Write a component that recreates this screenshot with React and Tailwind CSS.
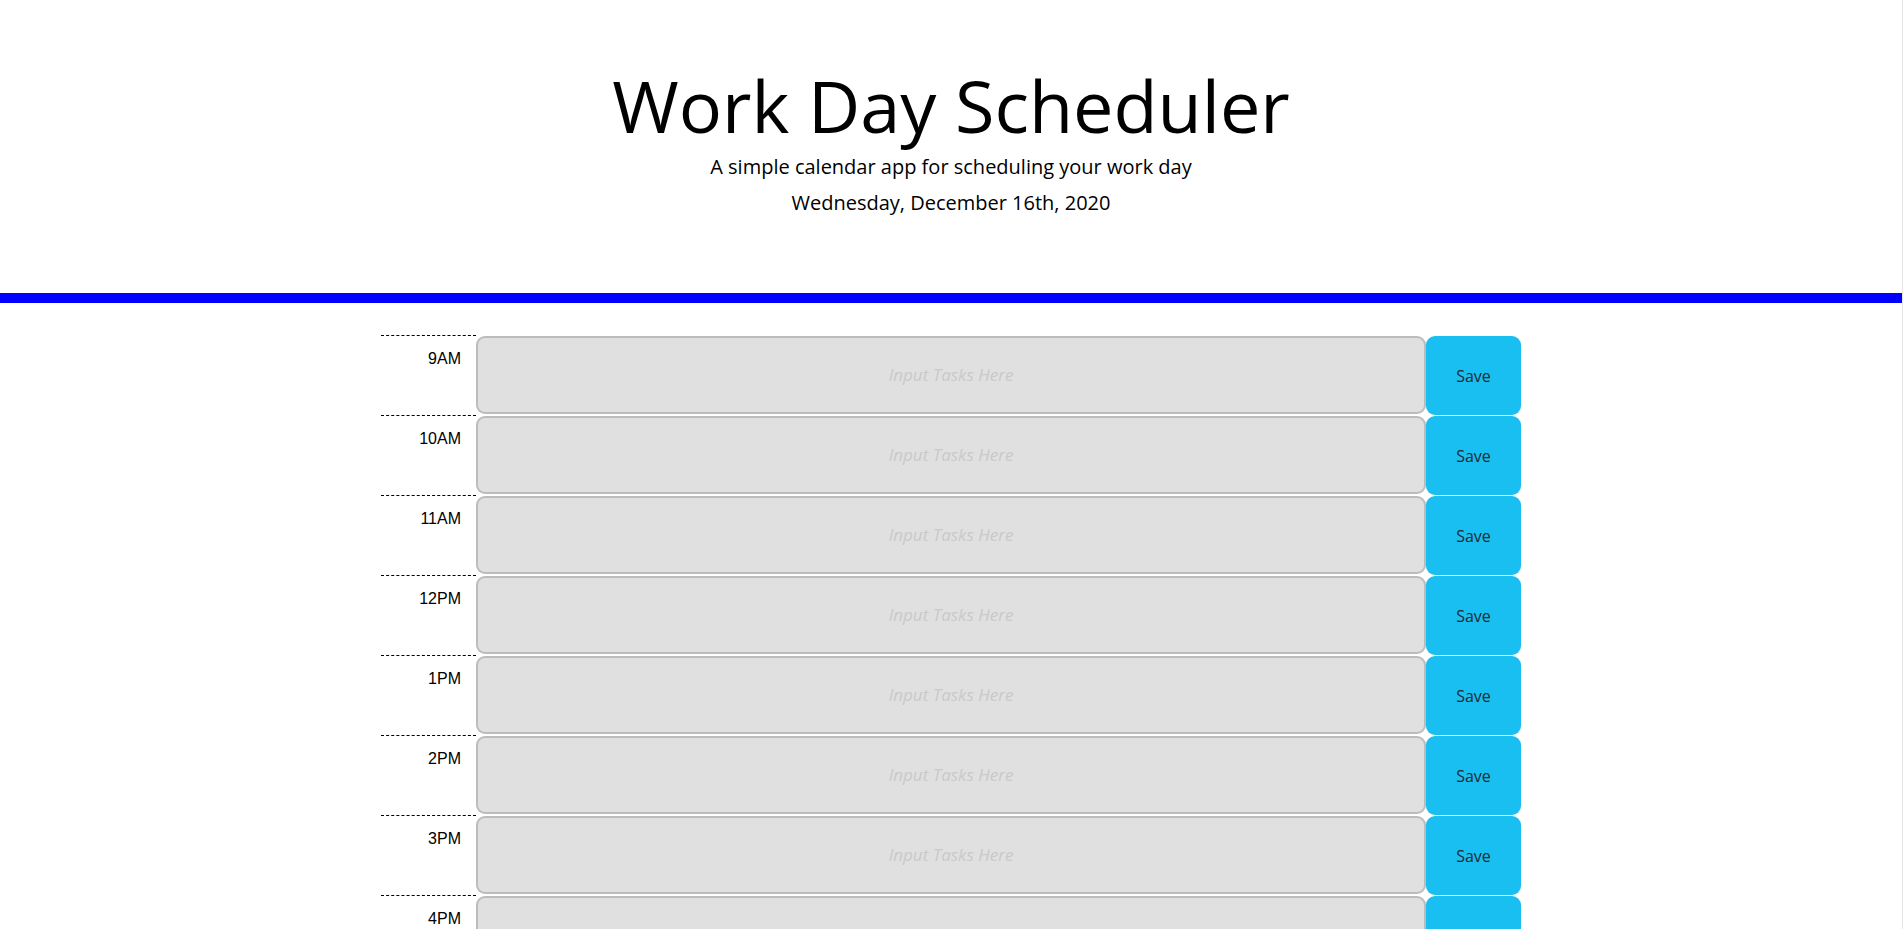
const hours = ["9AM", "10AM", "11AM", "12PM", "1PM", "2PM", "3PM", "4PM", "5PM"];

const TimeBlock = ({ hour }) => {
    return (
        <div className="flex h-[80px] border-t border-white">
            {/* hour label */}
            <div className="w-[95px] shrink-0 border-t border-dashed border-black -mt-px pt-[11px] pr-[15px] text-right text-[16px] leading-6 text-black font-['Liberation_Sans',Arial,sans-serif]">
                {hour}
            </div>
            <textarea
                className="flex-1 h-[78px] resize-none rounded-[9px] border-2 border-[#bcbcbc] bg-[#e0e0e0] pt-[25px] text-center text-[17px] leading-6 outline-none placeholder:italic placeholder:text-[#c9c9c9]"
                placeholder="Input Tasks Here"
            ></textarea>
            <button className="w-[95px] shrink-0 h-[79px] rounded-[9px] bg-[#19bff1] text-[16px] text-[#1f2a30]">
                Save
            </button>
        </div>
    );
};

const App = () => {
    return (
        <div className="h-[929px] overflow-hidden bg-white border-r border-[#e6e6e6] font-['Open_Sans',sans-serif] text-black">
            <header className="text-center pt-[62px] pb-[75px] border-b-[10px] border-[#0000ff]">
                <h1 className="text-[72px] leading-[1.2] font-normal">Work Day Scheduler</h1>
                <p className="text-[20px] leading-[30px] mt-[4px]">A simple calendar app for scheduling your work day</p>
                <p className="text-[20px] leading-[30px] mt-[6px]">Wednesday, December 16th, 2020</p>
            </header>

            <div className="w-[1140px] mx-auto mt-[32px]">
                {hours.map((hour) => (
                    <TimeBlock hour={hour} key={hour} />
                ))}
            </div>
        </div>
    );
};

export default App;
